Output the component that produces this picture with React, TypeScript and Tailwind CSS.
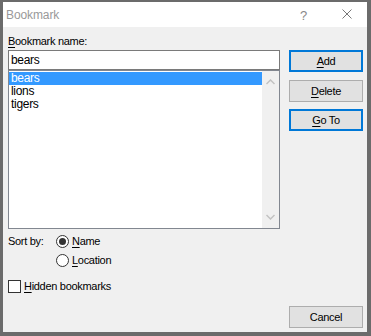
import { useState } from 'react';

const font = { fontFamily: '"Liberation Sans", Arial, sans-serif' };

function Btn({ label, acc, primary }: { label: string; acc: number; primary?: boolean }) {
  return (
    <button
      className={`h-[22px] w-full bg-[#e1e1e1] text-[11px] tracking-[-0.3px] text-black ${
        primary ? 'border-2 border-[#0078d7]' : 'border border-[#adadad]'
      }`}
    >
      {label.slice(0, acc)}
      <span className="underline underline-offset-[2px]">{label[acc]}</span>
      {label.slice(acc + 1)}
    </button>
  );
}

function Radio({ checked }: { checked: boolean }) {
  return (
    <span className="flex h-[13px] w-[13px] items-center justify-center rounded-full border border-[#333] bg-white">
      {checked && <span className="h-[7px] w-[7px] rounded-full bg-[#333]" />}
    </span>
  );
}

export default function App() {
  const [items] = useState(['bears', 'lions', 'tigers']);
  const [selected, setSelected] = useState('bears');
  const [sortBy, setSortBy] = useState<'name' | 'location'>('name');

  return (
    <div style={font} className="h-[336px] w-[371px] bg-[#6b6b6b] pb-[4px] pl-[3px] pr-[4px] pt-[2px]">
      <div className="flex h-full flex-col">
        {/* Barra de título */}
        <div className="relative flex h-[25px] items-center bg-white pl-[3px]">
          <span className="text-[12px] tracking-[-0.1px] text-[#999]">Bookmark</span>
          <span className="absolute left-[297px] top-[4px] text-[13px] text-[#888]">?</span>
          <svg className="absolute left-[339px] top-[7px]" width="10" height="10" viewBox="0 0 10 10">
            <path d="M0.5 0.5 L9.5 9.5 M9.5 0.5 L0.5 9.5" stroke="#777" strokeWidth="1" fill="none" />
          </svg>
        </div>

        {/* Corpo */}
        <div className="flex flex-1 gap-[9px] bg-[#f0f0f0] pb-[4px] pl-[5px] pr-[4px] pt-[7px] text-[11px] tracking-[-0.3px] text-black">
          <div className="flex w-[272px] flex-col">
            <div className="h-[15px] leading-[15px]">
              <span className="underline underline-offset-[2px]">B</span>ookmark name:
            </div>
            <div className="mt-[1px] flex h-[20px] items-center border border-[#7a7a7a] bg-white pl-[2px] text-[12px]">
              bears
            </div>
            <div className="flex h-[159px] border border-[#828790] bg-white">
              <div className="flex-1 pt-[1px]">
                {items.map((it) => (
                  <div
                    key={it}
                    onClick={() => setSelected(it)}
                    className={`h-[13px] pl-[2px] text-[12px] leading-[13px] ${
                      selected === it ? 'bg-[#3399ff] text-white' : ''
                    }`}
                  >
                    {it}
                  </div>
                ))}
              </div>
              <div className="flex w-[17px] flex-col items-center justify-between bg-[#f0f0f0] py-[8px]">
                <svg width="9" height="6" viewBox="0 0 9 6">
                  <path d="M0.5 5 L4.5 1 L8.5 5" stroke="#c2c2c2" strokeWidth="1.5" fill="none" />
                </svg>
                <svg width="9" height="6" viewBox="0 0 9 6">
                  <path d="M0.5 1 L4.5 5 L8.5 1" stroke="#c2c2c2" strokeWidth="1.5" fill="none" />
                </svg>
              </div>
            </div>

            <div className="mt-[4px] flex h-[16px] items-center">
              <span className="w-[48px]">Sort by:</span>
              <label className="flex items-center gap-[3px]" onClick={() => setSortBy('name')}>
                <Radio checked={sortBy === 'name'} />
                <span>
                  <span className="underline underline-offset-[2px]">N</span>ame
                </span>
              </label>
            </div>
            <div className="mt-[3px] flex h-[16px] items-center pl-[48px]">
              <label className="flex items-center gap-[3px]" onClick={() => setSortBy('location')}>
                <Radio checked={sortBy === 'location'} />
                <span>
                  <span className="underline underline-offset-[2px]">L</span>ocation
                </span>
              </label>
            </div>

            <div className="mt-[12px] flex h-[13px] items-center gap-[3px]">
              <span className="h-[13px] w-[13px] border border-[#333] bg-white" />
              <span>
                <span className="underline underline-offset-[2px]">H</span>idden bookmarks
              </span>
            </div>
          </div>

          <div className="flex w-[74px] flex-col">
            <div className="mt-[16px]">
              <Btn label="Add" acc={0} primary />
            </div>
            <div className="mt-[8px]">
              <Btn label="Delete" acc={0} />
            </div>
            <div className="mt-[7px]">
              <Btn label="Go To" acc={0} primary />
            </div>
            <div className="mt-auto">
              <button className="h-[22px] w-full border border-[#adadad] bg-[#e1e1e1] text-[11px] tracking-[-0.3px] text-black">
                Cancel
              </button>
            </div>
          </div>
        </div>
      </div>
    </div>
  );
}
